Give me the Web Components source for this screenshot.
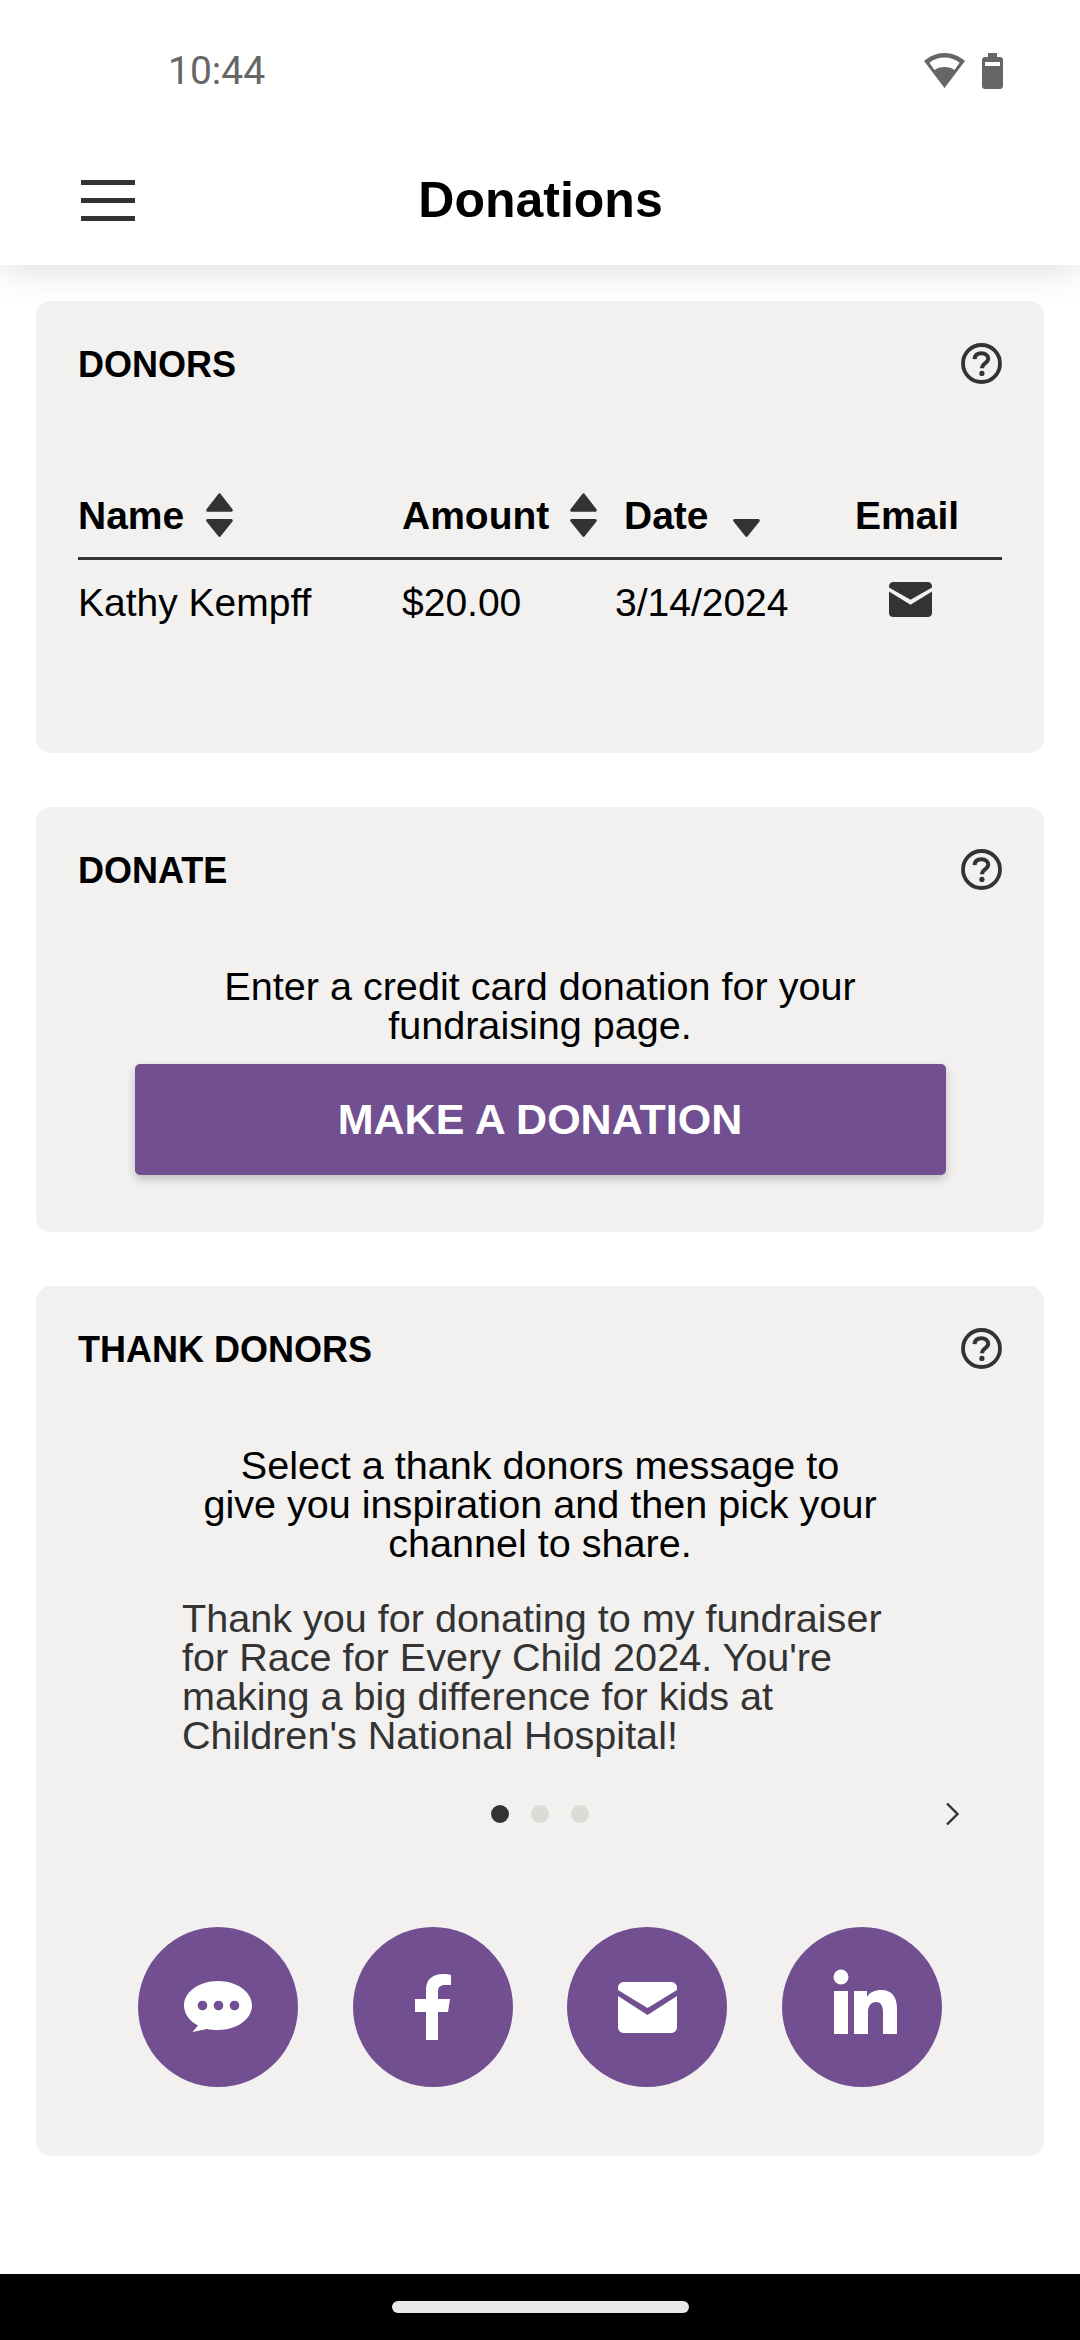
<!DOCTYPE html>
<html lang="en">
<head>
<meta charset="utf-8">
<title>Donations</title>
<style>
  html, body { margin: 0; padding: 0; }
  body {
    width: 1080px;
    height: 2340px;
    background: #fff;
    font-family: "Liberation Sans", Arial, sans-serif;
    color: #000;
    display: flex;
    flex-direction: column;
    overflow: hidden;
  }
  main {
    flex: 1;
    display: flex;
    flex-direction: column;
    gap: 54px;
    padding: 36px 36px 0;
  }
</style>
</head>
<body>
  <app-header title="Donations"></app-header>
  <main>
    <info-card heading="DONORS" style="height:452px"><donors-table></donors-table></info-card>
    <info-card heading="DONATE" style="height:425px">
      <donate-panel></donate-panel>
    </info-card>
    <info-card heading="THANK DONORS" style="height:870px">
      <thank-panel></thank-panel>
    </info-card>
  </main>
  <nav-bar></nav-bar>

<script>
// small helper so every element does the same thing
class Base extends HTMLElement {
  constructor() {
    super();
    this.attachShadow({ mode: 'open' });
  }
  connectedCallback() {
    this.shadowRoot.innerHTML = this.html();
  }
}

class MailIcon extends Base {
  html() {
    return `
    <style>:host { display: block; width: var(--w, 59px); height: var(--h, 51px); } svg { display: block; width: 100%; height: 100%; }</style>
    <svg viewBox="0 0 59 51" preserveAspectRatio="none" fill="currentColor">
      <path d="M6 0H53C56.5 0 59 2.5 59 6V8L29.5 26L0 8V6C0 2.5 2.5 0 6 0Z"/>
      <path d="M0 14L29.5 33L59 14V45C59 48.5 56.5 51 53 51H6C2.5 51 0 48.5 0 45Z"/>
    </svg>`;
  }
}

class HelpIcon extends Base {
  html() {
    return `
    <style>:host { display: block; width: 41px; height: 41px; } svg { display: block; }</style>
    <svg width="41" height="41" viewBox="0 0 41 41" fill="none" stroke="#333">
      <circle cx="20.5" cy="20.5" r="18.5" stroke-width="3.8"/>
      <path d="M13.6 16.2C13.8 12.2 16.6 10.2 20.4 10.2C24.4 10.2 27.2 12.4 27.2 15.8C27.2 20.2 21 20.4 21 25.2" stroke-width="4"/>
      <circle cx="20.9" cy="30.4" r="2.6" fill="#333" stroke="none"/>
    </svg>`;
  }
}

class SortIcon extends Base {
  html() {
    const up = this.getAttribute('dir') !== 'down';
    return `
    <style>:host { display: block; width: 27px; height: 44px; } svg { display: block; }</style>
    <svg width="27" height="44" viewBox="0 0 27 44" fill="#333" stroke="#333" stroke-width="3" stroke-linejoin="round">
      ${up ? '<path d="M13.5 1.8L25.3 17.2H1.7Z"/>' : ''}
      <path d="M1.7 27.5H25.3L13.5 42.4Z"/>
    </svg>`;
  }
}

class AppHeader extends Base {
  html() {
    return `
    <style>
      :host {
        display: block;
        position: relative;
        z-index: 2;
        height: 265px;
        background: #fff;
        box-shadow: 0 6px 34px rgba(0,0,0,.13);
      }
      .status {
        height: 160px;
        display: flex;
        align-items: flex-start;
        padding: 53px 77px 0 168px;
        box-sizing: border-box;
      }
      .time { font: 400 39px/36px Roboto, sans-serif; color: #666; flex: 1; }
      .status svg { display: block; }
      .wifi { margin: 0 17px 0 0; }
      .bar {
        display: grid;
        grid-template-columns: 1fr auto 1fr;
        align-items: center;
        height: 80px;
        padding-left: 81px;
      }
      .menu { display: flex; flex-direction: column; gap: 13px; width: 54px; }
      .menu i { display: block; height: 5px; background: #333; }
      h1 { margin: 0; font: 700 50px/58px "Liberation Sans", Arial, sans-serif; transform: translateX(-40px); }
    </style>
    <div class="status">
      <span class="time">10:44</span>
      <svg class="wifi" width="41" height="35" viewBox="0 0 41 35" fill="#666">
        <path fill-rule="evenodd" d="M20.5 0C12.6 0 5.6 3 0 8L20.5 35L41 8C35.4 3 28.4 0 20.5 0ZM20.5 4.6C26.4 4.6 31.8 6.6 35.6 9.8L30.5 17C28 15 24.5 14 20.5 14C16.5 14 13 15 10.500 17L5.4 9.8C9.2 6.6 14.6 4.6 20.5 4.6Z"/>
      </svg>
      <svg width="21" height="36" viewBox="0 0 21 36" fill="#666">
        <path fill-rule="evenodd" d="M6 0H15V4H18C19.7 4 21 5.3 21 7V33C21 34.7 19.7 36 18 36H3C1.3 36 0 34.7 0 33V7C0 5.3 1.3 4 3 4H6ZM3 9V13H18V9Z"/>
      </svg>
    </div>
    <div class="bar">
      <div class="menu"><i></i><i></i><i></i></div>
      <h1>${this.getAttribute('title')}</h1>
      <span></span>
    </div>`;
  }
}

class InfoCard extends Base {
  html() {
    return `
    <style>
      :host {
        display: flex;
        flex-direction: column;
        box-sizing: border-box;
        background: #f2f1f0;
        border-radius: 15px;
        padding: 42px 42px 0;
      }
      .head { display: flex; justify-content: space-between; align-items: center; height: 41px; }
      h2 { margin: 0; padding-top: 1px; font: 700 36px/41px "Liberation Sans", Arial, sans-serif; }
    </style>
    <div class="head"><h2>${this.getAttribute('heading')}</h2><help-icon></help-icon></div>
    <slot></slot>`;
  }
}

class DonorsTable extends Base {
  html() {
    return `
    <style>
      :host { display: block; margin-top: 108px; font: 400 39px/44px "Liberation Sans", Arial, sans-serif; }
      .row { display: grid; grid-template-columns: 324px 213px 240px 1fr; }
      .head { font-weight: 700; border-bottom: 3px solid #333; height: 65px; }
      .h { display: flex; align-items: flex-start; padding-top: 2px; }
      .h sort-icon { margin-top: -1px; }
      .body { padding-top: 21px; }
      mail-icon { --w: 43px; --h: 35px; color: #333; margin: 1px 0 0 34px; }
    </style>
    <div class="row head">
      <div class="h" style="gap:22px">Name<sort-icon></sort-icon></div>
      <div class="h" style="gap:21px">Amount<sort-icon></sort-icon></div>
      <div class="h" style="gap:24px;padding-left:9px">Date<sort-icon dir="down"></sort-icon></div>
      <div class="h">Email</div>
    </div>
    <div class="row body">
      <div>Kathy Kempff</div>
      <div>$20.00</div>
      <div>3/14/2024</div>
      <div><mail-icon></mail-icon></div>
    </div>`;
  }
}

class DonatePanel extends Base {
  html() {
    return `
    <style>
      :host { display: flex; flex-direction: column; align-items: center; margin-top: 77px; }
      p { margin: 0; width: 700px; text-align: center; font: 400 39.6px/39px "Liberation Sans", Arial, sans-serif; }
      .btn {
        margin-top: 19px;
        width: 811px;
        height: 111px;
        flex: none;
        display: flex;
        align-items: center;
        justify-content: center;
        background: #724f91;
        color: #fff;
        border-radius: 5px;
        font: 700 43px/1 "Liberation Sans", Arial, sans-serif;
        box-shadow: 0 4px 10px rgba(0,0,0,.22);
      }
    </style>
    <p>Enter a credit card donation for your fundraising page.</p>
    <div class="btn">MAKE A DONATION</div>`;
  }
}

class ShareButton extends Base {
  html() {
    return `
    <style>
      :host { display: block; width: 160px; height: 160px; border-radius: 50%; background: #724f91; position: relative; color: #fff; }
      svg { display: block; }
      mail-icon { position: absolute; left: 51px; top: 55px; }
    </style>
    ${this.icon()}`;
  }
  icon() {
    switch (this.getAttribute('kind')) {
      case 'chat':
        return `<svg width="160" height="160" viewBox="0 0 160 160" fill="#fff">
          <path d="M80 54C61 54 46 65 46 78.500C46 87 51.500 94 60 98.500L54.500 105L69 102C72.500 102.700 76 103 80 103C99 103 114 92 114 78.500C114 65 99 54 80 54Z"/>
          <g fill="#724f91"><circle cx="64.500" cy="78.500" r="4.800"/><circle cx="80.500" cy="78.500" r="4.800"/><circle cx="96.500" cy="78.500" r="4.800"/></g>
        </svg>`;
      case 'fb':
        return `<svg width="160" height="160" viewBox="0 0 160 160" fill="#fff">
          <path d="M73 113V85H62V72H73V63C73 52 80 47 90 47C93 47 96 47.300 98 48V58H92C87 58 85 60 85 65V72H97L95 85H85V113Z"/>
        </svg>`;
      case 'mail':
        return `<mail-icon></mail-icon>`;
      case 'in':
        return `<svg width="160" height="160" viewBox="0 0 160 160" fill="#fff">
          <circle cx="59" cy="50" r="7.500"/><path d="M52 64H66V107H52Z"/>
          <path d="M72 64H85V70C88 65 93 63 99 63C111 63 115 71 115 82V107H101V85C101 79 99 75 94 75C89 75 86 79 86 85V107H72Z"/>
        </svg>`;
    }
    return '';
  }
}

class ThankPanel extends Base {
  html() {
    return `
    <style>
      :host { display: block; margin-top: 77px; font: 400 39.6px/39px "Liberation Sans", Arial, sans-serif; }
      p { margin: 0; }
      .intro { width: 678px; margin: 0 auto; text-align: center; }
      .msg { margin: 36px 0 0 104px; width: 720px; color: #333; }
      .pager { position: relative; display: flex; justify-content: center; gap: 22px; margin-top: 41px; height: 36px; align-items: center; }
      .pager i { width: 18px; height: 18px; border-radius: 50%; background: #dcdbd6; }
      .pager i.on { background: #333; }
      .pager svg { position: absolute; right: 43px; top: 6px; }
      .share { display: flex; justify-content: center; gap: 54.5px; margin-top: 95px; }
    </style>
    <p class="intro">Select a thank donors message to give you inspiration and then pick your channel to share.</p>
    <p class="msg">Thank you for donating to my fundraiser for Race for Every Child 2024. You're making a big difference for kids at Children's National Hospital!</p>
    <div class="pager">
      <i class="on"></i><i></i><i></i>
      <svg width="14" height="24" viewBox="0 0 14 24" fill="none" stroke="#333" stroke-width="2.400"><path d="M2 1.500L12.500 12L2 22.500"/></svg>
    </div>
    <div class="share">
      <share-button kind="chat"></share-button>
      <share-button kind="fb"></share-button>
      <share-button kind="mail"></share-button>
      <share-button kind="in"></share-button>
    </div>`;
  }
}

class NavBar extends Base {
  html() {
    return `
    <style>
      :host { display: flex; justify-content: center; height: 66px; background: #000; padding-top: 27px; box-sizing: border-box; }
      i { display: block; width: 297px; height: 12px; border-radius: 6px; background: #e8e8e8; }
    </style>
    <i></i>`;
  }
}

customElements.define('mail-icon', MailIcon);
customElements.define('help-icon', HelpIcon);
customElements.define('sort-icon', SortIcon);
customElements.define('app-header', AppHeader);
customElements.define('info-card', InfoCard);
customElements.define('donors-table', DonorsTable);
customElements.define('donate-panel', DonatePanel);
customElements.define('share-button', ShareButton);
customElements.define('thank-panel', ThankPanel);
customElements.define('nav-bar', NavBar);
</script>
</body>
</html>
